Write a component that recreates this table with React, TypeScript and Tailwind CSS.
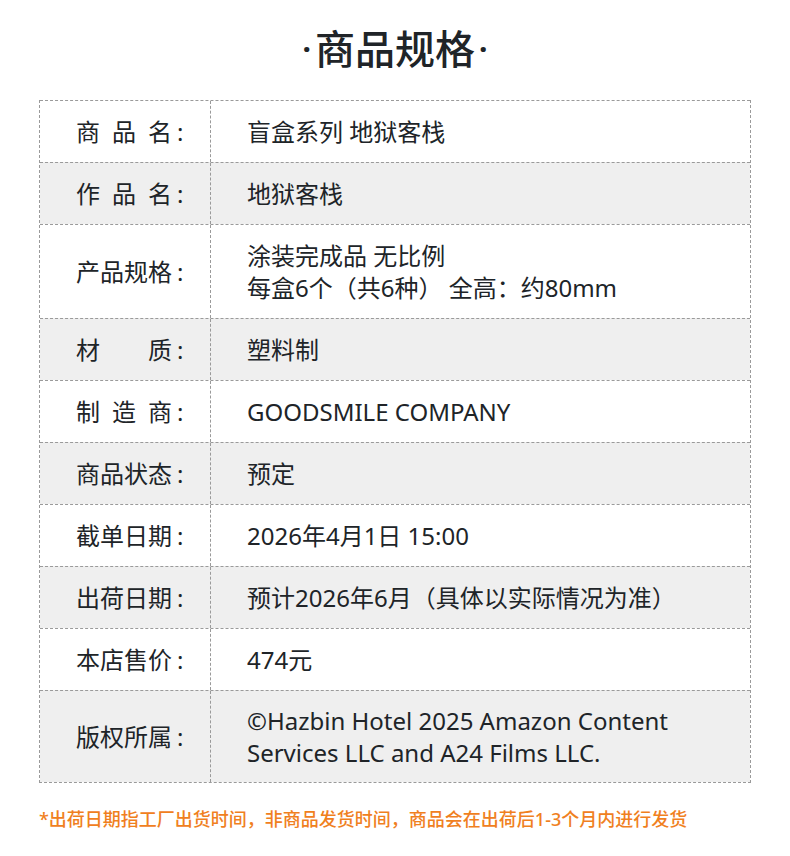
import React from 'react';

const rows: { label: string[]; value: string[]; h: string }[] = [
  { label: ['商', '品', '名'], value: ['盲盒系列 地狱客栈'], h: 'h-[62px]' },
  { label: ['作', '品', '名'], value: ['地狱客栈'], h: 'h-[62px]' },
  { label: ['产', '品', '规', '格'], value: ['涂装完成品 无比例', '每盒6个（共6种） 全高：约80mm'], h: 'h-[94px]' },
  { label: ['材', '质'], value: ['塑料制'], h: 'h-[62px]' },
  { label: ['制', '造', '商'], value: ['GOODSMILE COMPANY'], h: 'h-[62px]' },
  { label: ['商', '品', '状', '态'], value: ['预定'], h: 'h-[62px]' },
  { label: ['截', '单', '日', '期'], value: ['2026年4月1日 15:00'], h: 'h-[62px]' },
  { label: ['出', '荷', '日', '期'], value: ['预计2026年6月（具体以实际情况为准）'], h: 'h-[62px]' },
  { label: ['本', '店', '售', '价'], value: ['474元'], h: 'h-[62px]' },
  { label: ['版', '权', '所', '属'], value: ['©Hazbin Hotel 2025 Amazon Content', 'Services LLC and A24 Films LLC.'], h: 'h-[92px]' },
];

export default function App() {
  return (
    <div className="w-[790px] h-[856px] bg-white text-[#202428] font-['Noto_Sans','Noto_Sans_CJK_SC',sans-serif]">
      {/* Title */}
      <div className="h-[100px] flex items-center justify-center pb-[2px]">
        <h1 className="text-[40px] font-medium leading-none flex items-center">
          <span className="text-[30px] font-bold mr-[4px]">·</span>
          商品规格
          <span className="text-[30px] font-bold ml-[4px]">·</span>
        </h1>
      </div>

      {/* Spec table */}
      <div className="mx-[39px] border-x border-b border-dashed border-[#9a9a9a]">
        {rows.map((row, i) => (
          <div
            key={i}
            className={`flex border-t border-dashed border-[#9a9a9a] ${row.h} ${
              i % 2 === 1 ? 'bg-[#efefef]' : 'bg-white'
            }`}
          >
            <div className="w-[171px] shrink-0 border-r border-dashed border-[#9a9a9a] flex items-center pl-[36px] text-[24px]">
              <div className="w-[96px] flex justify-between">
                {row.label.map((c, j) => (
                  <span key={j}>{c}</span>
                ))}
              </div>
              <span className="ml-[5px]">:</span>
            </div>
            <div className="flex-1 flex flex-col justify-center pl-[36px] text-[24px] leading-[32px]">
              {row.value.map((v, j) => (
                <div key={j}>{v}</div>
              ))}
            </div>
          </div>
        ))}
      </div>

      {/* Note */}
      <p className="mt-[23px] ml-[39px] text-[18px] text-[#f0801e] font-medium">
        *出荷日期指工厂出货时间，非商品发货时间，商品会在出荷后1-3个月内进行发货
      </p>
    </div>
  );
}
